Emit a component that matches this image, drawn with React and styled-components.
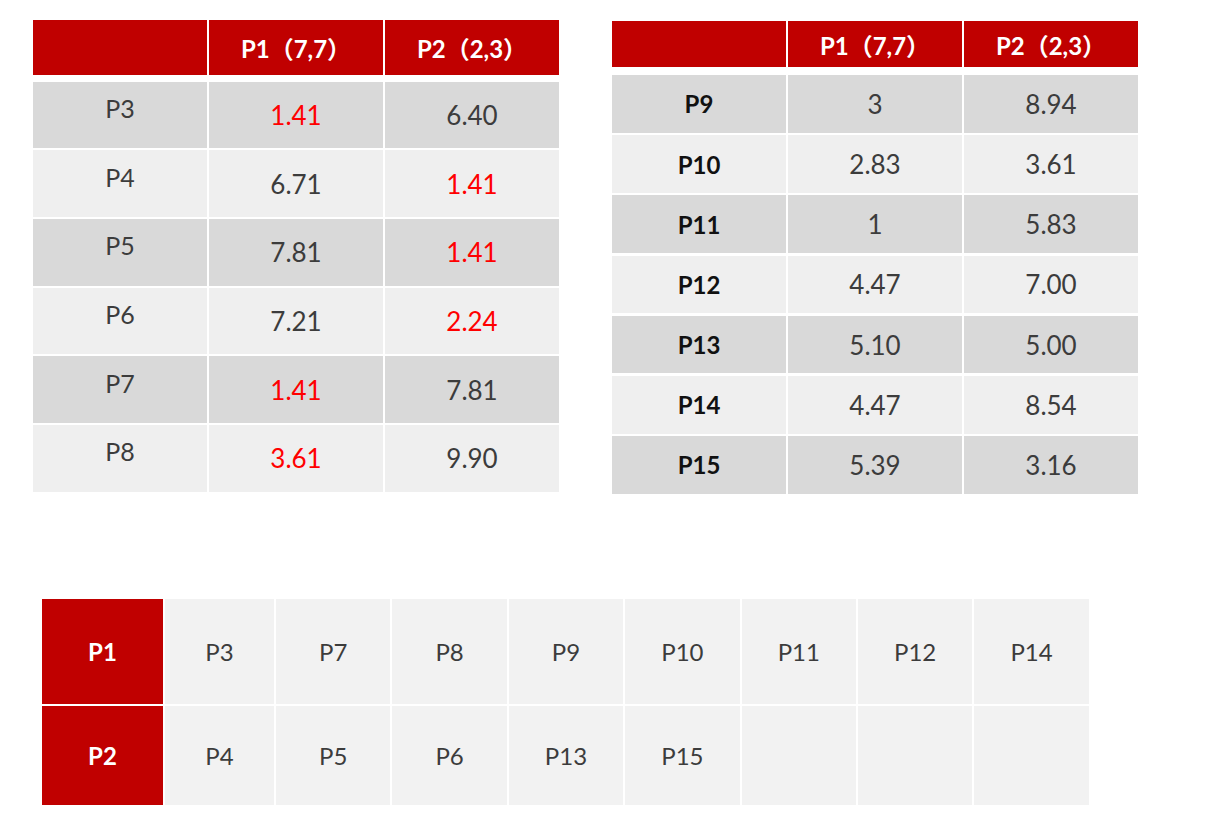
import styled, { createGlobalStyle } from "styled-components";

const GlobalStyle = createGlobalStyle`
  body {
    margin: 0;
    background: #ffffff;
    font-family: "Lato", "Noto Sans CJK SC", sans-serif;
  }
`;

const Page = styled.div`
  padding: 20px 0 0 33px;
`;

const TopRow = styled.div`
  display: flex;
  align-items: flex-start;
  gap: 53px;
`;

const Table = styled.div`
  display: flex;
  flex-direction: column;
  margin-top: ${(p) => p.$offset || 0}px;
`;

const HeadRow = styled.div`
  display: grid;
  grid-template-columns: repeat(3, 174px);
  column-gap: 2px;
  height: ${(p) => p.$h}px;
  margin-bottom: ${(p) => p.$gap}px;
`;

const HeadCell = styled.div`
  background: #c00000;
  color: #ffffff;
  font-weight: 700;
  font-size: 24px;
  display: flex;
  align-items: center;
  justify-content: center;
  white-space: pre;
`;

const Body = styled.div`
  display: flex;
  flex-direction: column;
  gap: ${(p) => p.$gap}px;
`;

const Row = styled.div`
  display: grid;
  grid-template-columns: repeat(3, 174px);
  column-gap: 2px;
  height: ${(p) => p.$h}px;
`;

const Cell = styled.div`
  background: ${(p) => (p.$dark ? "#d9d9d9" : "#efefef")};
  color: ${(p) => (p.$red ? "#ff0000" : "#3c3c3c")};
  font-size: 26px;
  display: flex;
  align-items: center;
  justify-content: center;
`;

const Label = styled(Cell)`
  color: ${(p) => (p.$bold ? "#111111" : "#3c3c3c")};
  font-weight: ${(p) => (p.$bold ? 700 : 400)};
  font-size: ${(p) => (p.$bold ? 24 : 25)}px;
  padding-bottom: ${(p) => (p.$lift ? 14 : 0)}px;
`;

const Grid = styled.div`
  margin: 105px 0 0 9px;
  display: grid;
  grid-template-columns: 121px 109px repeat(7, 114.4px);
  grid-template-rows: 105px 99px;
  gap: 2px;
`;

const GridCell = styled.div`
  background: ${(p) => (p.$head ? "#c00000" : "#f2f2f2")};
  color: ${(p) => (p.$head ? "#ffffff" : "#3c3c3c")};
  font-weight: ${(p) => (p.$head ? 700 : 400)};
  font-size: 24px;
  display: flex;
  align-items: center;
  justify-content: center;
  padding-top: 1px;
  box-sizing: border-box;
`;

const left = [
  ["P3", "1.41", "6.40", 1],
  ["P4", "6.71", "1.41", 2],
  ["P5", "7.81", "1.41", 2],
  ["P6", "7.21", "2.24", 2],
  ["P7", "1.41", "7.81", 1],
  ["P8", "3.61", "9.90", 1],
];

const right = [
  ["P9", "3", "8.94"],
  ["P10", "2.83", "3.61"],
  ["P11", "1", "5.83"],
  ["P12", "4.47", "7.00"],
  ["P13", "5.10", "5.00"],
  ["P14", "4.47", "8.54"],
  ["P15", "5.39", "3.16"],
];

const groups = [
  ["P1", ["P3", "P7", "P8", "P9", "P10", "P11", "P12", "P14"]],
  ["P2", ["P4", "P5", "P6", "P13", "P15", "", "", ""]],
];

function Header({ h, gap }) {
  return (
    <HeadRow $h={h} $gap={gap}>
      <HeadCell />
      <HeadCell>P1（7,7）</HeadCell>
      <HeadCell>P2（2,3）</HeadCell>
    </HeadRow>
  );
}

export default function App() {
  return (
    <Page>
      <GlobalStyle />
      <TopRow>
        <Table>
          <Header h={55} gap={6.7} />
          <Body $gap={2}>
            {left.map(([name, a, b, red], i) => (
              <Row key={name} $h={66.7}>
                <Label $dark={i % 2 === 0} $lift>
                  {name}
                </Label>
                <Cell $dark={i % 2 === 0} $red={red === 1}>
                  {a}
                </Cell>
                <Cell $dark={i % 2 === 0} $red={red === 2}>
                  {b}
                </Cell>
              </Row>
            ))}
          </Body>
        </Table>
        <Table $offset={1}>
          <Header h={46} gap={8} />
          <Body $gap={2.5}>
            {right.map(([name, a, b], i) => (
              <Row key={name} $h={57.7}>
                <Label $dark={i % 2 === 0} $bold>
                  {name}
                </Label>
                <Cell $dark={i % 2 === 0}>{a}</Cell>
                <Cell $dark={i % 2 === 0}>{b}</Cell>
              </Row>
            ))}
          </Body>
        </Table>
      </TopRow>
      <Grid>
        {groups.map(([head, items]) => [
          <GridCell key={head} $head>
            {head}
          </GridCell>,
          ...items.map((it, j) => <GridCell key={head + j}>{it}</GridCell>),
        ])}
      </Grid>
    </Page>
  );
}
